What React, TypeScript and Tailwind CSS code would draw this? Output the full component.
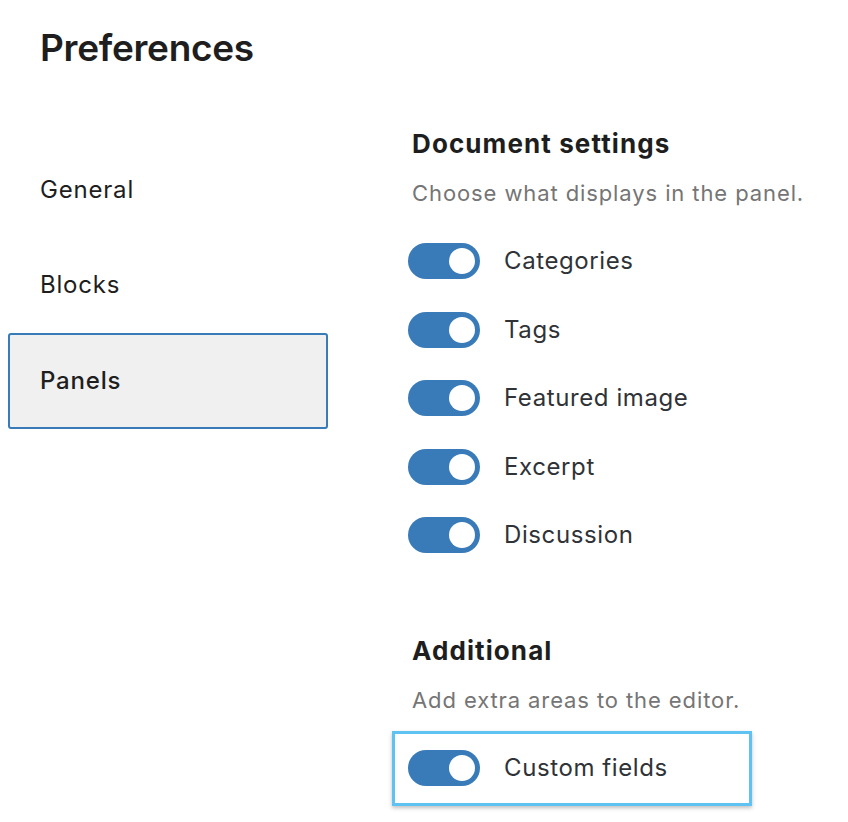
import React, { useState } from "react";

const font = { fontFamily: "Inter, 'Liberation Sans', sans-serif" };

type ToggleProps = { on: boolean; onClick: () => void };

const Toggle: React.FC<ToggleProps> = ({ on, onClick }) => (
  <button
    onClick={onClick}
    className={`relative w-[72px] h-[36px] rounded-full shrink-0 ${on ? "bg-[#387bb8]" : "bg-[#c7c7c7]"}`}
  >
    <span
      className={`absolute top-[5px] w-[26px] h-[26px] rounded-full bg-white ${on ? "left-[41px]" : "left-[5px]"}`}
    ></span>
  </button>
);

const App: React.FC = () => {
  const [active, setActive] = useState("Panels");
  const [panels, setPanels] = useState<Record<string, boolean>>({
    Categories: true,
    Tags: true,
    "Featured image": true,
    Excerpt: true,
    Discussion: true,
    "Custom fields": true,
  });

  const flip = (key: string) =>
    setPanels((prev) => ({ ...prev, [key]: !prev[key] }));

  const navItems = ["General", "Blocks", "Panels"];
  const docItems = ["Categories", "Tags", "Featured image", "Excerpt", "Discussion"];

  return (
    <div className="w-[848px] h-[822px] bg-white overflow-hidden" style={font}>
      <h1 className="pl-[40px] pt-[26px] text-[37px] leading-[44px] font-semibold tracking-[-0.3px] text-[#1e1e1e]">
        Preferences
      </h1>

      <div className="flex items-start">
        {/* Sidebar */}
        <nav className="w-[328px] pl-2 pt-[72px] flex flex-col">
          {navItems.map((item) => (
            <button
              key={item}
              onClick={() => setActive(item)}
              className={`h-[95.5px] w-[320px] text-left pl-[30px] text-[24px] tracking-[0.8px] rounded-[3px] text-[#1e1e1e] ${
                active === item
                  ? "bg-[#f0f0f0] border-2 border-[#387bb8] font-medium"
                  : "border-2 border-transparent"
              }`}
            >
              {item}
            </button>
          ))}
        </nav>

        {/* Panel content */}
        <div className="ml-[80px] pt-[58px] flex flex-col">
          <h2 className="pl-[4px] text-[26px] leading-[32px] font-bold text-[#1e1e1e] tracking-[1.1px]">
            Document settings
          </h2>
          <p className="pl-[4px] mt-[19px] text-[22px] leading-[28px] text-[#757575] tracking-[0.9px]">
            Choose what displays in the panel.
          </p>

          <div className="mt-[20px] flex flex-col">
            {docItems.map((item) => (
              <div key={item} className="h-[68.5px] flex items-center gap-[24px]">
                <Toggle on={panels[item]} onClick={() => flip(item)} />
                <span className="text-[24px] text-[#2f3337] tracking-[0.6px]">{item}</span>
              </div>
            ))}
          </div>

          <h2 className="pl-[4px] mt-[65px] text-[26px] leading-[32px] font-bold text-[#1e1e1e] tracking-[1.1px]">
            Additional
          </h2>
          <p className="pl-[4px] mt-[19px] text-[22px] leading-[28px] text-[#757575] tracking-[0.9px]">
            Add extra areas to the editor.
          </p>

          <div className="-ml-[16px] mt-[17px] w-[360px] h-[75px] border-[3px] border-[#5ec2f2] shadow-[0_2px_4px_rgba(0,0,0,0.25)] flex items-center gap-[24px] pl-[13px]">
            <Toggle on={panels["Custom fields"]} onClick={() => flip("Custom fields")} />
            <span className="text-[24px] text-[#2f3337] tracking-[0.6px]">Custom fields</span>
          </div>
        </div>
      </div>
    </div>
  );
};

export default App;
